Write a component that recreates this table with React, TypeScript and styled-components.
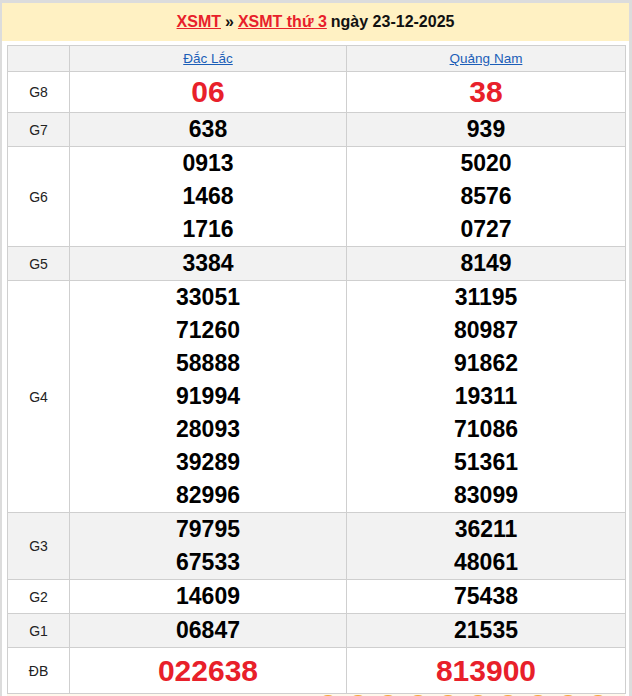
import React from "react";
import styled, { createGlobalStyle } from "styled-components";

const Global = createGlobalStyle`
  html, body { margin: 0; padding: 0; background: #dcdcdc; }
  body { font-family: "Liberation Sans", Arial, sans-serif; overflow: hidden; }
`;

const Page = styled.div`
  margin: 3px 3px 0 2px;
  background: #fff;
  height: 700px;
`;

const Title = styled.h2`
  margin: 0;
  height: 38px;
  background: #fff1c3;
  display: flex;
  align-items: center;
  justify-content: center;
  gap: 4px;
  font-size: 16px;
  font-weight: bold;
  color: #111;
`;

const RedLink = styled.a`
  color: #e8202a;
  text-decoration: underline;
`;

const Body = styled.div`
  padding: 4px 4px 0 5px;
`;

const Table = styled.table`
  width: 618px;
  border-collapse: collapse;
  table-layout: fixed;
`;

const HeadCell = styled.th`
  background: #f2f2f2;
  border: 1px solid #cfcfcf;
  height: 25px;
  padding: 0;
  font-size: 13.5px;
  font-weight: normal;
  text-align: center;
`;

const BlueLink = styled.a`
  color: #1b5eb8;
  text-decoration: underline;
`;

const Row = styled.tr<{ $alt: boolean }>`
  background: ${(p) => (p.$alt ? "#f2f2f2" : "#fff")};
`;

const Label = styled.td`
  border: 1px solid #cfcfcf;
  text-align: center;
  font-size: 14px;
  color: #222;
  padding: 0;
`;

const NumCell = styled.td`
  border: 1px solid #cfcfcf;
  text-align: center;
  padding: 0;
`;

const Num = styled.div<{ $big?: boolean; $lh: number }>`
  font-weight: bold;
  font-size: ${(p) => (p.$big ? "30px" : "23px")};
  line-height: ${(p) => p.$lh}px;
  color: ${(p) => (p.$big ? "#e8202a" : "#000")};
`;

const Footer = styled.div`
  background: #fff8ec;
  height: 30px;
  display: flex;
  justify-content: flex-end;
  gap: 6px;
  padding: 1px 15px 0 0;
`;

const Ball = styled.span`
  width: 24px;
  height: 24px;
  border: 2px solid #f4a63a;
  border-radius: 50%;
  box-sizing: border-box;
`;

type Prize = { label: string; a: string[]; b: string[]; big?: boolean; lh: number };

const prizes: Prize[] = [
  { label: "G8", a: ["06"], b: ["38"], big: true, lh: 40 },
  { label: "G7", a: ["638"], b: ["939"], lh: 33 },
  { label: "G6", a: ["0913", "1468", "1716"], b: ["5020", "8576", "0727"], lh: 33 },
  { label: "G5", a: ["3384"], b: ["8149"], lh: 33 },
  {
    label: "G4",
    a: ["33051", "71260", "58888", "91994", "28093", "39289", "82996"],
    b: ["31195", "80987", "91862", "19311", "71086", "51361", "83099"],
    lh: 33,
  },
  { label: "G3", a: ["79795", "67533"], b: ["36211", "48061"], lh: 33 },
  { label: "G2", a: ["14609"], b: ["75438"], lh: 33 },
  { label: "G1", a: ["06847"], b: ["21535"], lh: 33 },
  { label: "ĐB", a: ["022638"], b: ["813900"], big: true, lh: 45 },
];

export default function App() {
  return (
    <>
      <Global />
      <Page>
        <Title>
          <RedLink href="#">XSMT</RedLink>
          <span>»</span>
          <RedLink href="#">XSMT thứ 3</RedLink>
          <span>ngày 23-12-2025</span>
        </Title>
        <Body>
          <Table>
            <colgroup>
              <col style={{ width: 62 }} />
              <col style={{ width: 277 }} />
              <col style={{ width: 279 }} />
            </colgroup>
            <thead>
              <tr>
                <HeadCell />
                <HeadCell>
                  <BlueLink href="#">Đắc Lắc</BlueLink>
                </HeadCell>
                <HeadCell>
                  <BlueLink href="#">Quảng Nam</BlueLink>
                </HeadCell>
              </tr>
            </thead>
            <tbody>
              {prizes.map((p, i) => (
                <Row key={p.label} $alt={i % 2 === 1}>
                  <Label>{p.label}</Label>
                  <NumCell>
                    {p.a.map((n, j) => (
                      <Num key={j} $big={p.big} $lh={p.lh}>
                        {n}
                      </Num>
                    ))}
                  </NumCell>
                  <NumCell>
                    {p.b.map((n, j) => (
                      <Num key={j} $big={p.big} $lh={p.lh}>
                        {n}
                      </Num>
                    ))}
                  </NumCell>
                </Row>
              ))}
            </tbody>
          </Table>
          <Footer>
            {Array.from({ length: 10 }).map((_, i) => (
              <Ball key={i} />
            ))}
          </Footer>
        </Body>
      </Page>
    </>
  );
}
